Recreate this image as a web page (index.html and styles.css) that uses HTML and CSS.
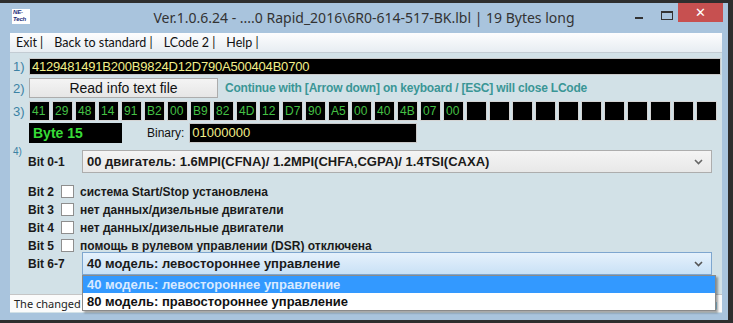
FILE: index.html
```html
<!DOCTYPE html>
<html lang="ru">
<head>
    <meta charset="UTF-8">
    <meta name="viewport" content="width=device-width, initial-scale=1.0">
    <title>LCode</title>
    <link rel="stylesheet" href="styles.css">
</head>
<body>
    <div class="window">
        <!-- Заголовок окна -->
        <div class="titlebar">
            <div class="app-icon">NE-<br>Tech</div>
            <div class="title">Ver.1.0.6.24 - ....0 Rapid_2016\6R0-614-517-BK.lbl | 19 Bytes long</div>
            <div class="caption-btns">
                <span class="cap-min"></span>
                <span class="cap-max"></span>
                <span class="cap-close">&#x2715;</span>
            </div>
        </div>

        <div class="client">
            <!-- Меню -->
            <div class="menubar">
                <span>Exit |</span>
                <span>Back to standard |</span>
                <span>LCode 2 |</span>
                <span>Help |</span>
            </div>

            <div class="content">
                <!-- 1) строка кодирования -->
                <div class="row row-code">
                    <span class="num">1)</span>
                    <div class="field code-field">4129481491B200B9824D12D790A500404B0700</div>
                </div>

                <!-- 2) -->
                <div class="row row-info">
                    <span class="num">2)</span>
                    <div class="btn">Read info text file</div>
                    <span class="hint">Continue with [Arrow down] on keyboard / [ESC] will close LCode</span>
                </div>

                <!-- 3) байты -->
                <div class="row row-bytes">
                    <span class="num">3)</span>
                    <div class="bytes" id="bytes"></div>
                </div>

                <div class="row row-byte">
                    <div class="byte-name">Byte 15</div>
                    <span class="bin-label">Binary:</span>
                    <div class="field bin-field">01000000</div>
                </div>

                <!-- 4) биты -->
                <div class="row row-bit01">
                    <span class="num num-small">4)</span>
                    <span class="bit-label">Bit 0-1</span>
                    <div class="combo">
                        <span>00 двигатель: 1.6MPI(CFNA)/ 1.2MPI(CHFA,CGPA)/ 1.4TSI(CAXA)</span>
                        <svg class="chev" width="9" height="6" viewBox="0 0 9 6"><path d="M1 1 L4.5 4.5 L8 1" fill="none" stroke="#666" stroke-width="1.6"/></svg>
                    </div>
                </div>

                <div class="checks">
                    <div class="check-row"><span class="bit-short">Bit 2</span><span class="box"></span><span class="check-text">система Start/Stop установлена</span></div>
                    <div class="check-row"><span class="bit-short">Bit 3</span><span class="box"></span><span class="check-text">нет данных/дизельные двигатели</span></div>
                    <div class="check-row"><span class="bit-short">Bit 4</span><span class="box"></span><span class="check-text">нет данных/дизельные двигатели</span></div>
                    <div class="check-row"><span class="bit-short">Bit 5</span><span class="box"></span><span class="check-text">помощь в рулевом управлении (DSR) отключена</span></div>
                </div>

                <div class="row row-bit67">
                    <span class="bit-label">Bit 6-7</span>
                    <div class="combo combo-open">
                        <span>40 модель: левостороннее управление</span>
                        <svg class="chev" width="9" height="6" viewBox="0 0 9 6"><path d="M1 1 L4.5 4.5 L8 1" fill="none" stroke="#555" stroke-width="1.6"/></svg>
                        <div class="drop-list">
                            <div class="drop-item active">40 модель: левостороннее управление</div>
                            <div class="drop-item">80 модель: правостороннее управление</div>
                        </div>
                    </div>
                </div>
            </div>

            <!-- Строка состояния -->
            <div class="statusbar">
                <span>The changed</span>
                <span>g</span>
            </div>
        </div>
    </div>

    <script>
        // Байты кодирования
        const code = '4129481491B200B9824D12D790A500404B0700';
        const bytesBox = document.getElementById('bytes');
        for (let i = 0; i < 30; i++) {
            const cell = document.createElement('div');
            cell.classList.add('cell');
            cell.textContent = code.substr(i * 2, 2);
            bytesBox.appendChild(cell);
        }
    </script>
</body>
</html>
```

FILE: styles.css
```css
body {
    margin: 0;
    padding: 0;
    background-color: #2e2e2e;
    font-family: "Liberation Sans", Arial, sans-serif;
}

.window {
    width: 728px;
    height: 317px;
    margin-top: 3px;
    background-color: #a9c4dd;
    display: flex;
    flex-direction: column;
}

/* заголовок */
.titlebar {
    height: 30px;
    display: grid;
    grid-template-columns: 1fr auto 1fr;
    align-items: start;
}

.app-icon {
    margin: 6px 0 0 12px;
    width: 17px;
    height: 15px;
    background: white;
    color: #1c2c7a;
    font-size: 6px;
    font-weight: bold;
    font-style: italic;
    line-height: 7px;
    padding-left: 1px;
    letter-spacing: -0.2px;
}

.title {
    padding-top: 5px;
    font-family: "Noto Sans", sans-serif;
    font-size: 14px;
    color: #333;
    white-space: nowrap;
}

.caption-btns {
    justify-self: end;
    display: flex;
    align-items: flex-start;
    margin-right: 5px;
}

.cap-min {
    width: 8px;
    height: 2px;
    background: #333;
    margin: 14px 18px 0 0;
}

.cap-max {
    width: 10px;
    height: 6px;
    border: 1px solid #333;
    border-top-width: 2px;
    margin: 8px 5px 0 0;
}

.cap-close {
    width: 45px;
    height: 19px;
    background: #c75050;
    color: white;
    font-size: 13px;
    text-align: center;
    line-height: 19px;
}

/* рабочая область */
.client {
    margin-left: 10px;
    width: 712px;
    height: 280px;
    background: #d2e1e7;
    display: flex;
    flex-direction: column;
}

.menubar {
    height: 19px;
    background: linear-gradient(#fdfdfe, #e7edf2);
    border-bottom: 1px solid #c3ccd3;
    display: flex;
    align-items: center;
    gap: 11px;
    padding-left: 6px;
    font-family: Lato, "Noto Sans", sans-serif;
    font-size: 12.5px;
    color: #111;
}

.content {
    padding: 5px 1px 0 3px;
}

.row {
    display: flex;
    align-items: center;
}

.num {
    width: 16px;
    color: #3c82a4;
    font-size: 13px;
    flex: none;
}

.field {
    background: #000;
    border: 1px solid #c9c9c9;
    color: #f2ef8a;
    font-size: 13px;
    box-sizing: border-box;
    padding-left: 2px;
}

.row-code .code-field {
    flex: 1;
    height: 17px;
    line-height: 15px;
    letter-spacing: -0.2px;
}

.row-info {
    margin-top: 3px;
    height: 20px;
}

.btn {
    width: 189px;
    height: 20px;
    box-sizing: border-box;
    background: linear-gradient(#f4f4f4, #e6e6e6);
    border: 1px solid #acacac;
    text-align: center;
    font-size: 14px;
    line-height: 18px;
    color: #111;
}

.hint {
    margin-left: 7px;
    color: #3a9696;
    font-weight: bold;
    font-size: 12px;
    letter-spacing: -0.2px;
}

.row-bytes {
    margin-top: 3px;
}

.bytes {
    display: flex;
    gap: 2px;
}

.cell {
    width: 21px;
    height: 20px;
    box-sizing: border-box;
    background: #000;
    border: 1px solid #d4d4d4;
    color: #45c045;
    font-size: 12px;
    line-height: 18px;
    padding-left: 2px;
}

.row-byte {
    margin-top: 2px;
    padding-left: 16px;
}

.byte-name {
    width: 93px;
    height: 20px;
    background: #000;
    color: #38dc38;
    font-size: 14px;
    font-weight: bold;
    line-height: 20px;
    padding-left: 4px;
    box-sizing: border-box;
}

.bin-label {
    margin-left: 25px;
    font-size: 12px;
    color: #111;
}

.bin-field {
    margin-left: 5px;
    width: 228px;
    height: 20px;
    line-height: 18px;
}

.row-bit01 {
    margin-top: 7px;
    align-items: flex-start;
}

.num-small {
    font-size: 10px;
    margin-top: -4px;
    width: 15px;
}

.bit-label {
    width: 54px;
    font-size: 12px;
    font-weight: bold;
    color: #1a1a1a;
    align-self: center;
    flex: none;
}

.combo {
    position: relative;
    width: 630px;
    height: 23px;
    box-sizing: border-box;
    background: linear-gradient(#f4f4f4, #e8e8e8);
    border: 1px solid #adadad;
    display: flex;
    align-items: center;
    justify-content: space-between;
    padding: 0 8px 0 4px;
    font-size: 13px;
    font-weight: bold;
    color: #1a1a1a;
}

.checks {
    margin-top: 12px;
    padding-left: 15px;
    display: flex;
    flex-direction: column;
    gap: 5px;
}

.check-row {
    display: flex;
    align-items: center;
    height: 13px;
}

.bit-short {
    width: 33px;
    font-size: 12px;
    font-weight: bold;
    color: #1a1a1a;
}

.box {
    width: 13px;
    height: 13px;
    box-sizing: border-box;
    background: white;
    border: 1px solid #8e8e8e;
    margin-right: 6px;
}

.check-text {
    font-size: 12px;
    font-weight: bold;
    color: #1a1a1a;
}

.row-bit67 {
    margin-top: 0;
    padding-left: 15px;
}

.combo-open {
    background: linear-gradient(#e5f1fc, #c9e1f6);
    border-color: #7ea6cf;
}

.drop-list {
    position: absolute;
    left: -1px;
    top: 22px;
    width: 632px;
    background: white;
    border: 1px solid #8a8a8a;
    box-shadow: 2px 2px 2px rgba(0, 0, 0, 0.35);
}

.drop-item {
    height: 17px;
    line-height: 17px;
    padding-left: 4px;
    color: #111;
}

.drop-item.active {
    background: #3399ff;
    color: #d9eaff;
}

.statusbar {
    margin-top: auto;
    margin-bottom: 1px;
    height: 18px;
    box-sizing: border-box;
    background: #fbfbfb;
    border-top: 1px solid #c5c5c5;
    display: flex;
    justify-content: space-between;
    align-items: center;
    padding: 0 5px 0 4px;
    font-family: "Noto Sans", sans-serif;
    font-size: 11px;
    color: #222;
}
```
